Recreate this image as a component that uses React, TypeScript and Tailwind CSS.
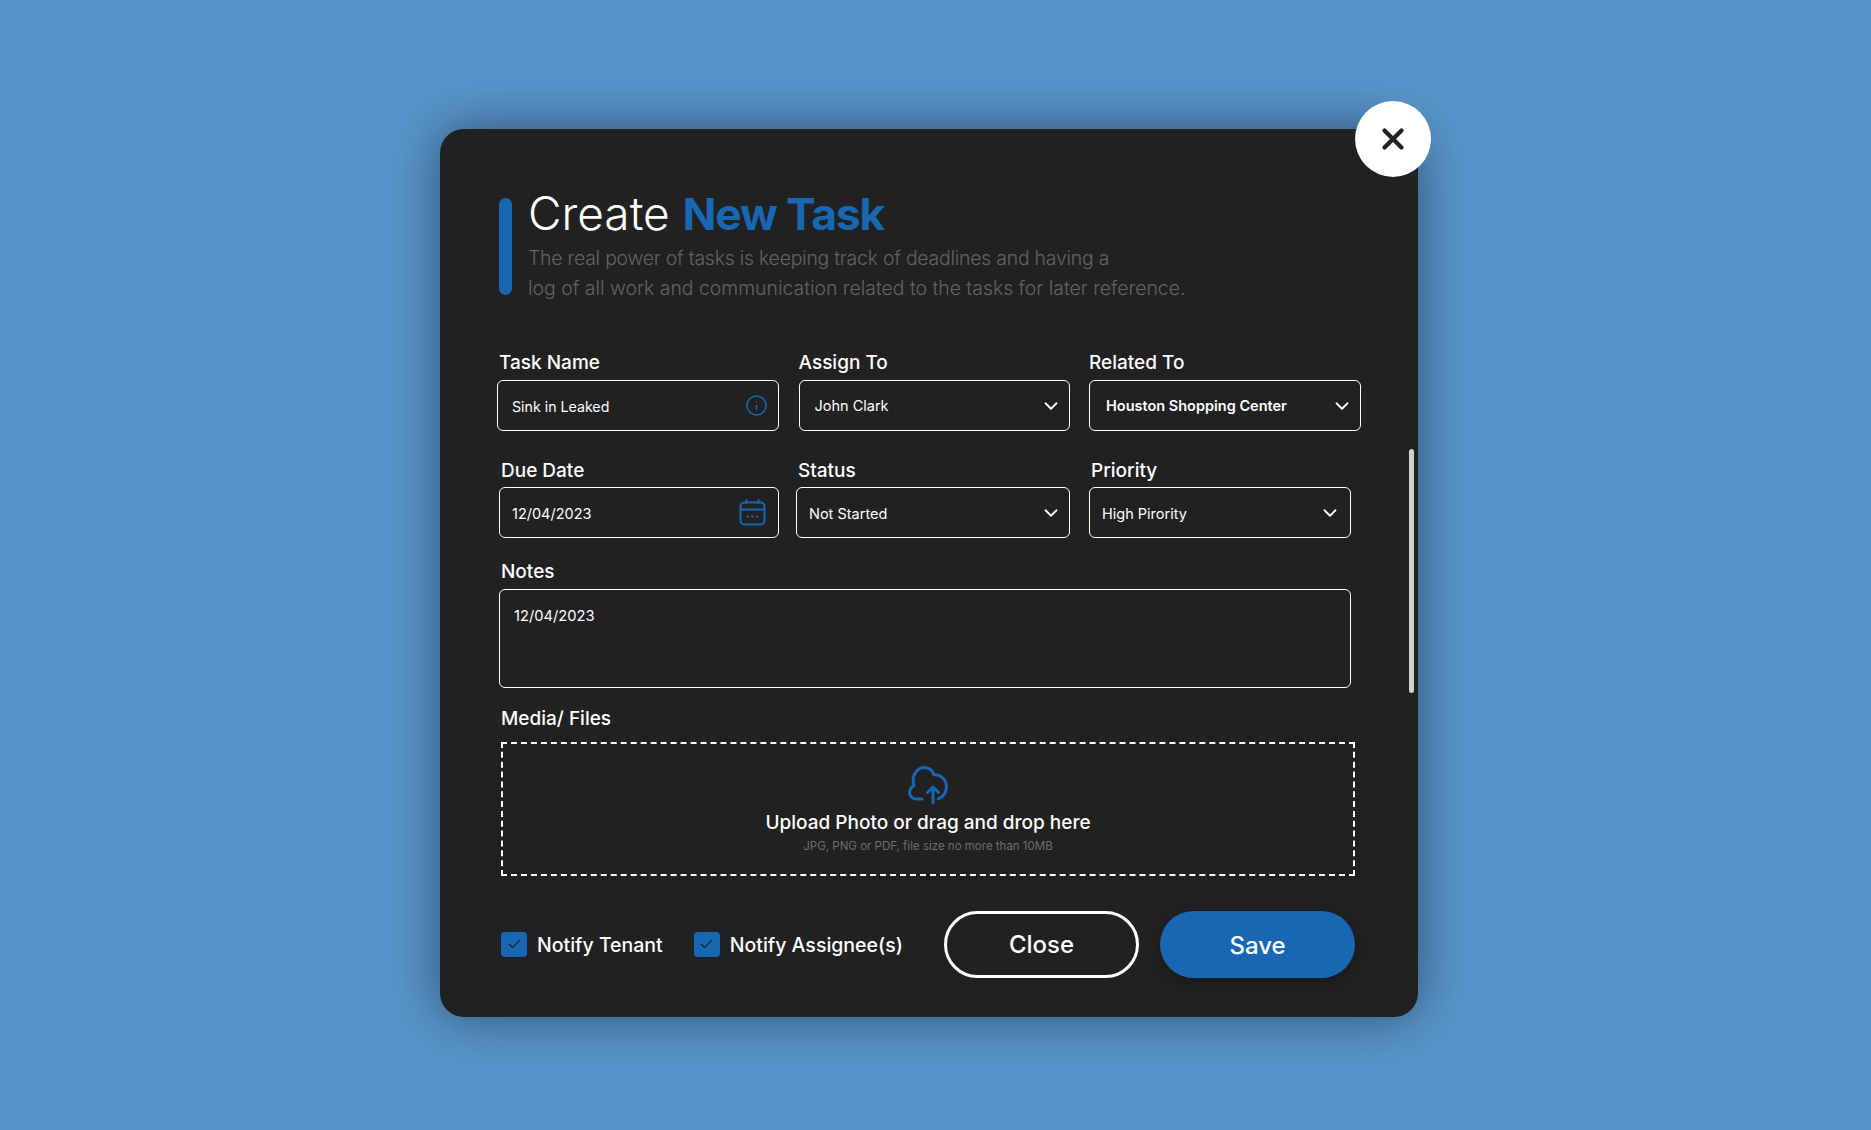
import React from 'react';
import { ChevronDown, Check, Info, X } from 'lucide-react';

const font = 'font-["Inter","Liberation_Sans",sans-serif]';

const SelectField: React.FC<{ label: string; value: string; className: string; labelClass?: string; textClass?: string; boxClass?: string; valueClass?: string }> = ({
  label,
  value,
  className,
  labelClass = '',
  textClass = 'pl-[13px] text-[14.5px]',
  boxClass = 'mt-[6px] pr-[7px]',
  valueClass = '',
}) => (
  <div className={className}>
    <div className={`text-[19px] font-medium leading-[22px] text-white ${labelClass}`}>{label}</div>
    <div className={`flex h-[51px] items-center justify-between rounded-[6px] border border-white ${boxClass} ${textClass} text-white`}>
      <span className={valueClass}>{value}</span>
      <ChevronDown className="h-[22px] w-[22px]" strokeWidth={2} />
    </div>
  </div>
);

const CalendarIcon = () => (
  <svg width="27" height="27" viewBox="0 0 27 27" fill="none" stroke="#1767b3" strokeWidth="2" strokeLinecap="round">
    <rect x="1.5" y="3.5" width="24" height="22" rx="4" />
    <path d="M1.5 10.5h24M7.5 1v3M19.5 1v3" />
    <path d="M8.5 17.5h.6M13.2 17.5h.6M18 17.5h.6" strokeWidth="2.2" />
  </svg>
);

const CloudIcon = () => (
  <svg width="40" height="38" viewBox="0 0 40 38" fill="none" stroke="#1767b3" strokeWidth="3" strokeLinecap="round" strokeLinejoin="round">
    <path d="M14 33H8.5C4 33 1.6 29.6 1.6 26.4c0-3.2 1.6-5.4 4.4-6.6C5 17 4.6 15 5.4 11.4 6.6 5.6 11 1.6 16.2 1.6c4.8 0 8 2.6 9.8 7.2 6.8-.4 12.4 4.6 12.4 12 0 5.4-3 10-8 12" />
    <path d="M25 36.5V21.5M19.5 26.5l5.5-5.5 5.5 5.5" />
  </svg>
);

const Notify: React.FC<{ label: string; className?: string }> = ({ label, className = '' }) => (
  <div className={`flex items-center ${className}`}>
    <div className="flex h-[25px] w-[26px] items-center justify-center rounded-[4px] bg-[#1767b3]">
      <Check className="h-[15px] w-[15px] text-[#1d2733]" strokeWidth={2.2} />
    </div>
    <span className="ml-[10px] pt-[2px] text-[19.5px] font-medium text-white">{label}</span>
  </div>
);

export default function App() {
  return (
    <div className={`min-h-[1130px] overflow-hidden bg-[#5794c9] pl-[440px] pt-[129px] ${font}`}>
      <div className="relative h-[888px] w-[978px] rounded-[24px] bg-[#212121] pl-[57px] pt-[69px] shadow-[0_0_50px_rgba(0,0,0,0.45)]">
        <button className="absolute right-[-13px] top-[-28px] flex h-[76px] w-[76px] items-center justify-center rounded-full bg-white text-[#222222]">
          <X className="h-[34px] w-[34px]" strokeWidth={3} />
        </button>
        <div className="absolute right-[4px] top-[320px] h-[244px] w-[5px] rounded-full bg-[#d0d0d0]" />

        <div className="ml-[2px] flex">
          <div className="h-[97px] w-[13px] rounded-full bg-[#1767b3]" />
          <div className="ml-[16px] mt-[-12px]">
            <h1 className="whitespace-nowrap text-[46px] font-light leading-[54px] text-white">
              Create <span className="text-[44.5px] font-bold tracking-[-1.2px] text-[#1767b3]">New Task</span>
            </h1>
            <p className="mt-[2px] whitespace-nowrap text-[19.4px] font-light leading-[30px] text-[#636363]">
              <span className="tracking-[-0.22px]">The real power of tasks is keeping track of deadlines and having a</span>
              <br />
              log of all work and communication related to the tasks for later reference.
            </p>
          </div>
        </div>

        <div className="mt-[49px] flex">
          <div className="w-[282px]">
            <div className="pl-[2px] text-[19px] font-medium leading-[22px] text-white">Task Name</div>
            <div className="mt-[6px] flex h-[51px] items-center justify-between rounded-[6px] border border-white pl-[14px] pr-[10px] text-[14.2px] text-white">
              <span className="pt-[2px]">Sink in Leaked</span>
              <Info className="h-[23px] w-[23px] text-[#1767b3]" strokeWidth={1.6} />
            </div>
          </div>
          <SelectField label="Assign To" value="John Clark" className="ml-[19.5px] w-[271px]" textClass="pl-[15px] text-[14.5px]" />
          <SelectField
            label="Related To"
            value="Houston Shopping Center"
            className="ml-[19.5px] w-[272px]"
            textClass="pl-[16px] text-[14.5px] font-semibold"
          />
        </div>

        <div className="ml-[2px] mt-[29px] flex">
          <div className="w-[280px]">
            <div className="pl-[2px] text-[19px] font-medium leading-[22px] text-white">Due Date</div>
            <div className="mt-[5px] flex h-[51px] items-center justify-between rounded-[6px] border border-white pl-[12px] pr-[12px] text-[14.5px] text-white">
              <span className="pt-[2px]">12/04/2023</span>
              <CalendarIcon />
            </div>
          </div>
          <SelectField
            label="Status"
            value="Not Started"
            className="ml-[17px] w-[274px]"
            labelClass="pl-[2px]"
            boxClass="mt-[5px] pr-[7px]"
            textClass="pl-[12px] text-[14.5px]"
            valueClass="pt-[2px]"
          />
          <SelectField
            label="Priority"
            value="High Pirority"
            className="ml-[19px] w-[262px]"
            labelClass="pl-[2px]"
            boxClass="mt-[5px] pr-[9px]"
            textClass="pl-[12px] text-[14.5px]"
            valueClass="pt-[2px]"
          />
        </div>

        <div className="ml-[2px] mt-[23px] w-[852px]">
          <div className="pl-[2px] text-[19px] font-medium leading-[22px] text-white">Notes</div>
          <div className="mt-[6px] h-[99px] rounded-[6px] border border-white pl-[14px] pt-[17px] text-[14.7px] leading-[18px] text-white">
            12/04/2023
          </div>
        </div>

        <div className="ml-[4px] mt-[20px] w-[854px]">
          <div className="text-[19px] font-medium leading-[22px] text-white">Media/ Files</div>
          <div className="mt-[12px] flex h-[134px] flex-col items-center border-2 border-dashed border-white pt-[22px]">
            <CloudIcon />
            <div className="mt-[6px] text-[19px] font-medium leading-[26px] text-white">Upload Photo or drag and drop here</div>
            <div className="mt-[3px] text-[11.5px] leading-[14px] text-[#6e6e6e]">JPG, PNG or PDF, file size no more than 10MB</div>
          </div>
        </div>

        <div className="ml-[4px] mt-[35px] flex items-center">
          <Notify label="Notify Tenant" />
          <Notify label="Notify Assignee(s)" className="ml-[31px]" />
          <button className="ml-auto h-[67px] w-[195px] rounded-full border-[3px] border-white pt-[1px] text-[24px] font-medium text-white">Close</button>
          <button className="ml-[21px] mr-[63px] h-[67px] w-[195px] rounded-full bg-[#1767b3] pt-[2px] text-[24px] font-medium text-white shadow-[0_4px_14px_rgba(0,0,0,0.25)]">Save</button>
        </div>
      </div>
    </div>
  );
}
